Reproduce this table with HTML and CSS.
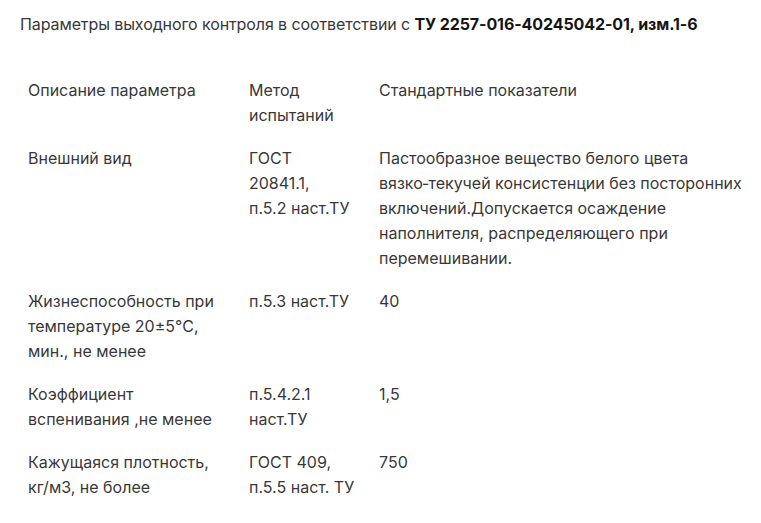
FILE: index.html
```html
<!DOCTYPE html>
<html lang="ru">
<head>
<meta charset="utf-8">
<link rel="stylesheet" href="styles.css">
</head>
<body>
<div class="page">
  <p class="title">Параметры выходного контроля в соответствии с <b>ТУ 2257-016-40245042-01, изм.1-6</b></p>
  <table class="specs">
    <colgroup>
      <col class="c1"><col class="c2"><col class="c3">
    </colgroup>
    <tr>
      <td>Описание параметра</td>
      <td>Метод испытаний</td>
      <td>Стандартные показатели</td>
    </tr>
    <tr>
      <td>Внешний вид</td>
      <td>ГОСТ 20841.1, п.5.2&nbsp;наст.ТУ</td>
      <td>Пастообразное вещество белого цвета вязко&#8209;текучей консистенции без посторонних включений.Допускается осаждение наполнителя, распределяющего при перемешивании.</td>
    </tr>
    <tr>
      <td>Жизнеспособность при температуре 20±5°C, мин., не менее</td>
      <td>п.5.3 наст.ТУ</td>
      <td>40</td>
    </tr>
    <tr>
      <td>Коэффициент вспенивания ,не менее</td>
      <td>п.5.4.2.1 наст.ТУ</td>
      <td>1,5</td>
    </tr>
    <tr>
      <td>Кажущаяся плотность, кг/м3, не более</td>
      <td>ГОСТ 409, п.5.5 наст. ТУ</td>
      <td>750</td>
    </tr>
  </table>
</div>
</body>
</html>
```
FILE: styles.css
```css
html, body {
  margin: 0;
  padding: 0;
  background: #fff;
}
body {
  font-family: Inter, Roboto, "Liberation Sans", sans-serif;
  font-size: 16px;
  line-height: 25px;
  color: #383838;
}
.page {
  padding: 12px 20px;
}
.title {
  margin: 0 0 32px 0;
  letter-spacing: -0.1px;
}
.title b {
  color: #151515;
  font-weight: 700;
}
.specs {
  border-collapse: collapse;
  width: 741px;
  table-layout: fixed;
}
.c1 { width: 221px; }
.c2 { width: 130px; }
.specs td {
  vertical-align: top;
  padding: 9px 8px;
}
.specs td:nth-child(2) {
  padding-right: 16px;
}
```
